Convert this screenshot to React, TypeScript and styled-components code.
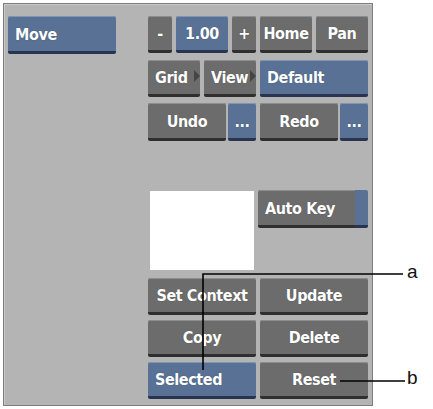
import styled, { createGlobalStyle } from "styled-components";

const GlobalStyle = createGlobalStyle`
  html, body {
    margin: 0;
    padding: 0;
    background: #ffffff;
  }
`;

const Colors = {
  panel: "#b4b4b4",
  grey: "#6c6c6c",
  greyDark: "#2f2f2f",
  blue: "#587194",
  blueDark: "#283450",
};

const Page = styled.div`
  position: relative;
  width: 433px;
  height: 409px;
  padding: 3px;
  box-sizing: border-box;
  background: #ffffff;
`;

const Panel = styled.div`
  width: 370px;
  height: 403px;
  box-sizing: border-box;
  border: 1px solid #7d7d7d;
  box-shadow: inset 1px 1px 0 #c9c9c9;
  background: ${Colors.panel};
  display: flex;
  padding: 12px 3px 0 4px;
  gap: 32px;
`;

const LeftColumn = styled.div`
  width: 108px;
`;

const RightColumn = styled.div`
  width: 220px;
  display: flex;
  flex-direction: column;
`;

const Row = styled.div<{ $gap?: number; $top?: number }>`
  display: flex;
  gap: ${(p) => p.$gap ?? 4}px;
  margin-top: ${(p) => p.$top ?? 0}px;
`;

const Btn = styled.div<{
  $w: number;
  $h?: number;
  $tone?: "grey" | "blue";
  $align?: "left" | "center";
}>`
  position: relative;
  width: ${(p) => p.$w}px;
  height: ${(p) => p.$h ?? 37}px;
  box-sizing: border-box;
  flex: none;
  display: flex;
  align-items: center;
  justify-content: ${(p) => (p.$align === "left" ? "flex-start" : "center")};
  padding: 1px ${(p) => (p.$align === "left" ? "7px" : "0")} 0;
  background: ${(p) => (p.$tone === "blue" ? Colors.blue : Colors.grey)};
  border-radius: 2px;
  border-bottom: 3px solid
    ${(p) => (p.$tone === "blue" ? Colors.blueDark : Colors.greyDark)};
  box-shadow: inset 0 1px 0
    ${(p) => (p.$tone === "blue" ? "#7f95b4" : "#8d8d8d")};
  color: #ffffff;
  font-family: "DejaVu Sans Condensed", "DejaVu Sans", sans-serif;
  font-weight: 700;
  font-size: 16px;
  letter-spacing: -0.4px;
  text-shadow: 0 0 1px rgba(0, 0, 0, 0.35);
  white-space: nowrap;
`;

const Arrow = styled.span`
  position: absolute;
  right: 0;
  top: 50%;
  margin-top: -7px;
  width: 0;
  height: 0;
  border-top: 6px solid transparent;
  border-bottom: 6px solid transparent;
  border-left: 6px solid #454545;
`;

const Preview = styled.div`
  width: 104px;
  height: 79px;
  margin: 1px 4px 0 2px;
  background: #ffffff;
  flex: none;
`;

const AutoKey = styled.div`
  display: flex;
  width: 110px;
  height: 38px;
  flex: none;
`;

const AutoKeyStrip = styled.div`
  width: 13px;
  height: 38px;
  box-sizing: border-box;
  background: ${Colors.blue};
  border-bottom: 3px solid ${Colors.blueDark};
  border-radius: 0 2px 2px 0;
`;

const ButtonGrid = styled.div`
  display: grid;
  grid-template-columns: 108px 108px;
  grid-auto-rows: 37px;
  gap: 5px 4px;
  margin-top: 8px;
`;

const Callouts = styled.svg`
  position: absolute;
  left: 0;
  top: 0;
  width: 433px;
  height: 409px;
  pointer-events: none;
`;

const CalloutLabel = styled.span<{ $y: number }>`
  position: absolute;
  left: 407px;
  top: ${(p) => p.$y}px;
  font-family: "Liberation Sans", Arial, sans-serif;
  font-size: 19px;
  color: #111111;
  line-height: 1;
`;

const App = (): JSX.Element => {
  return (
    <Page>
      <GlobalStyle />
      <Panel>
        <LeftColumn>
          <Btn $w={108} $h={38} $tone="blue" $align="left">
            Move
          </Btn>
        </LeftColumn>
        <RightColumn>
          <Row>
            <Btn $w={24}>-</Btn>
            <Btn $w={52} $tone="blue">
              1.00
            </Btn>
            <Btn $w={24}>+</Btn>
            <Btn $w={52}>Home</Btn>
            <Btn $w={52}>Pan</Btn>
          </Row>
          <Row $top={7}>
            <Btn $w={52} $align="left">
              Grid
              <Arrow />
            </Btn>
            <Btn $w={52} $align="left">
              View
              <Arrow />
            </Btn>
            <Btn $w={108} $tone="blue" $align="left">
              Default
            </Btn>
          </Row>
          <Row $top={6}>
            <Row $gap={2}>
              <Btn $w={78} $h={38}>
                Undo
              </Btn>
              <Btn $w={28} $h={38} $tone="blue">
                ...
              </Btn>
            </Row>
            <Row $gap={2}>
              <Btn $w={78} $h={38}>
                Redo
              </Btn>
              <Btn $w={28} $h={38} $tone="blue">
                ...
              </Btn>
            </Row>
          </Row>
          <Row $top={49} $gap={0}>
            <Preview />
            <AutoKey>
              <Btn $w={97} $h={38} $align="left" style={{ borderRadius: "2px 0 0 2px" }}>
                Auto Key
              </Btn>
              <AutoKeyStrip />
            </AutoKey>
          </Row>
          <ButtonGrid>
            <Btn $w={108}>Set Context</Btn>
            <Btn $w={108}>Update</Btn>
            <Btn $w={108}>Copy</Btn>
            <Btn $w={108}>Delete</Btn>
            <Btn $w={108} $tone="blue" $align="left">
              Selected
            </Btn>
            <Btn $w={108}>Reset</Btn>
          </ButtonGrid>
        </RightColumn>
      </Panel>
      <Callouts viewBox="0 0 433 409">
        <polyline
          points="203,370 203,274 403,274"
          fill="none"
          stroke="#000"
          strokeWidth={1.6}
        />
        <line x1={340} y1={381} x2={405} y2={381} stroke="#000" strokeWidth={1.6} />
      </Callouts>
      <CalloutLabel $y={262}>a</CalloutLabel>
      <CalloutLabel $y={368}>b</CalloutLabel>
    </Page>
  );
};

export default App;
